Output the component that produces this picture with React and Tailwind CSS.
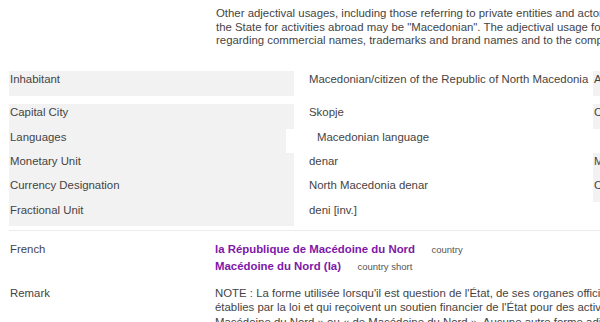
export default function App() {
  const font = { fontFamily: '"Liberation Sans", Arial, sans-serif' };
  return (
    <div
      className="w-[600px] h-[322px] overflow-hidden bg-white text-[11.4px] text-[#444]"
      style={font}
    >
      <div className="ml-[216px] pt-[7px] leading-[13.7px] whitespace-nowrap">
        <div>Other adjectival usages, including those referring to private entities and actors other than the State, as well as to private entities financed by</div>
        <div>the State for activities abroad may be "Macedonian". The adjectival usage for these purposes shall be in accordance with the procedures</div>
        <div>regarding commercial names, trademarks and brand names and to the competent authorities of both parties.</div>
      </div>

      <div className="mt-[23px] pl-[9px] leading-[15px] whitespace-nowrap">
        <div className="flex h-[25px] mb-[8px]">
          <div className="w-[285px] shrink-0 bg-[#f2f2f2] pl-px pt-px">Inhabitant</div>
          <div className="w-[299px] shrink-0 pl-[15px] pt-px">Macedonian/citizen of the Republic of North Macedonia</div>
          <div className="w-[300px] shrink-0 bg-[#f2f2f2] pl-px pt-px">Adjective</div>
        </div>
        <div className="flex h-[24.4px]">
          <div className="w-[285px] shrink-0 bg-[#f2f2f2] pl-px pt-px">Capital City</div>
          <div className="w-[299px] shrink-0 pl-[15px] pt-px">Skopje</div>
          <div className="w-[300px] shrink-0 bg-[#f2f2f2] pl-px pt-px">Country Code</div>
        </div>
        <div className="flex h-[24.4px]">
          <div className="w-[277px] shrink-0 bg-[#f2f2f2] pl-px pt-px">Languages</div>
          <div className="w-[307px] shrink-0 bg-white pl-[31px] pt-px">Macedonian language</div>
          <div className="w-[300px] shrink-0"></div>
        </div>
        <div className="flex h-[24.4px]">
          <div className="w-[285px] shrink-0 bg-[#f2f2f2] pl-px pt-px">Monetary Unit</div>
          <div className="w-[299px] shrink-0 pl-[15px] pt-px">denar</div>
          <div className="w-[300px] shrink-0 bg-[#f2f2f2] pl-px pt-px">Monetary Symbol</div>
        </div>
        <div className="flex h-[24.4px]">
          <div className="w-[285px] shrink-0 bg-[#f2f2f2] pl-px pt-px">Currency Designation</div>
          <div className="w-[299px] shrink-0 pl-[15px] pt-px">North Macedonia denar</div>
          <div className="w-[300px] shrink-0 bg-[#f2f2f2] pl-px pt-px">Currency Code</div>
        </div>
        <div className="flex h-[24.4px]">
          <div className="w-[285px] shrink-0 bg-[#f2f2f2] pl-px pt-px">Fractional Unit</div>
          <div className="w-[299px] shrink-0 pl-[15px] pt-px">deni [inv.]</div>
          <div className="w-[300px] shrink-0"></div>
        </div>
        <div className="mt-[4px] h-px bg-[#ececec]"></div>

        <div className="flex mt-[9.5px] leading-[16.5px]">
          <div className="w-[206px] shrink-0 pl-px">French</div>
          <div>
            <div>
              <span className="font-bold text-[#7d17a8]">la République de Macédoine du Nord</span>
              <span className="ml-[16.5px] text-[9.5px] text-[#555]">country</span>
            </div>
            <div>
              <span className="font-bold text-[#7d17a8]">Macédoine du Nord (la)</span>
              <span className="ml-[16.5px] text-[9.5px] text-[#555]">country short</span>
            </div>
          </div>
        </div>

        <div className="flex mt-[10.5px] leading-[14.4px]">
          <div className="w-[206px] shrink-0 pl-px">Remark</div>
          <div>
            <div>NOTE : La forme utilisée lorsqu'il est question de l'État, de ses organes officiels et des autres entités publiques, ainsi que des personnes morales</div>
            <div>établies par la loi et qui reçoivent un soutien financier de l'État pour des activités à l'étranger, est « République de Macédoine du Nord », « de la</div>
            <div>Macédoine du Nord » ou « de Macédoine du Nord ». Aucune autre forme adjectivale n'est autorisée.</div>
          </div>
        </div>
      </div>
    </div>
  );
}
